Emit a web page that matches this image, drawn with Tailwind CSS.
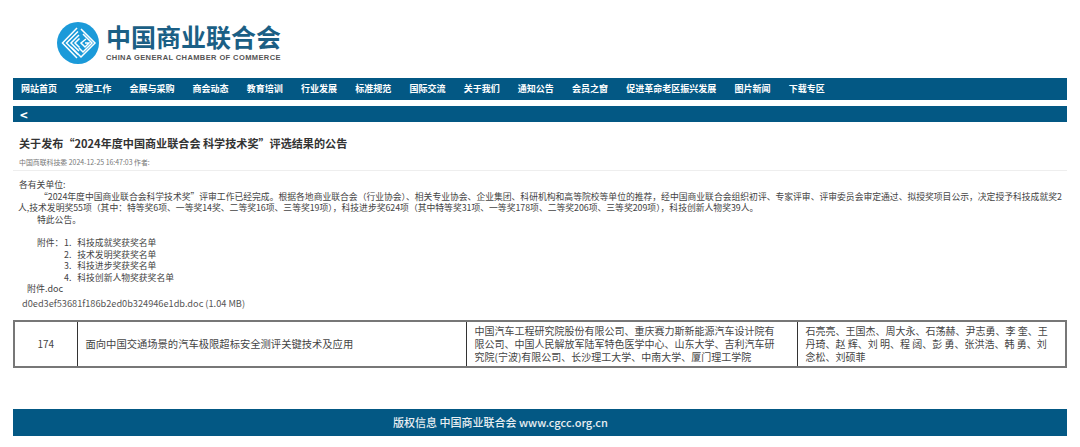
<!DOCTYPE html>
<html lang="zh-CN">
<head>
  <meta charset="UTF-8" />
  <title>关于发布“2024年度中国商业联合会 科学技术奖”评选结果的公告</title>
  <script src="https://cdn.jsdelivr.net/npm/@tailwindcss/browser@4"></script>
</head>
<body class="bg-white h-[447px] overflow-hidden font-['Noto_Sans_CJK_SC','Noto_Sans',sans-serif] text-[#444]">

  <!-- logo -->
  <header class="h-[78px] pl-[57px] pt-[22px] flex items-start gap-[7px]">
    <svg class="w-[42px] h-[42px] shrink-0" viewBox="0 0 42 42">
      <circle cx="21" cy="21" r="21" fill="#1b9ad9" />
      <g fill="none" stroke="#fff" stroke-width="1.5">
        <path d="M20 6 L5.5 21 L20 36" />
        <path d="M21 9.5 L9.5 21 L21 32.5" />
        <path d="M22 13 L14 21 L22 29" />
        <path d="M22.5 16.5 L18 21 L22.5 25.5" />
        <path d="M24 7 L38 21 L24 35 L14 25" />
        <path d="M26 12 L35 21 L26 30 L22 26" />
        <path d="M29 17 L24 21 L28 25 L32 21 L28 21" />
      </g>
    </svg>
    <div class="w-[176px]">
      <div class="text-[25px] leading-[28px] font-bold text-[#1b5f85] whitespace-nowrap">中国商业联合会</div>
      <div class="mt-[3px] text-[7.5px] leading-[10px] font-bold text-[#555] font-['Liberation_Sans',sans-serif] tracking-[0.4px] whitespace-nowrap">CHINA GENERAL CHAMBER OF COMMERCE</div>
    </div>
  </header>

  <main class="mx-[13px]">
    <nav class="h-[22px] bg-[#035884] pl-[8px] flex items-center gap-[18.2px] text-white text-[9px] font-bold whitespace-nowrap">
      <a>网站首页</a>
      <a>党建工作</a>
      <a>会展与采购</a>
      <a>商会动态</a>
      <a>教育培训</a>
      <a>行业发展</a>
      <a>标准规范</a>
      <a>国际交流</a>
      <a>关于我们</a>
      <a>通知公告</a>
      <a>会员之窗</a>
      <a>促进革命老区振兴发展</a>
      <a>图片新闻</a>
      <a>下载专区</a>
    </nav>
    <div class="mt-[6px] h-[16px] bg-[#035884] pl-[7px] flex items-center text-white text-[13px] font-bold leading-none">&lt;</div>

    <h1 class="mt-[13px] ml-[6px] text-[11.1px] leading-[16px] font-bold text-[#333] whitespace-nowrap">关于发布“2024年度中国商业联合会 科学技术奖”评选结果的公告</h1>
    <p class="mt-[6px] ml-[6px] text-[6.9px] leading-[10px] text-[#777] whitespace-nowrap">中国商联科技委 2024-12-25 16:47:03 作者:</p>
    <div class="mt-[3px] border-t border-[#eee]"></div>

    <article class="mt-[8px] text-[8.8px] leading-[11.6px] text-[#444] whitespace-nowrap">
      <p class="ml-[6px]">各有关单位:</p>
      <p class="ml-[26px]">“2024年度中国商业联合会科学技术奖”评审工作已经完成。根据各地商业联合会（行业协会）、相关专业协会、企业集团、科研机构和高等院校等单位的推荐，经中国商业联合会组织初评、专家评审、评审委员会审定通过、拟授奖项目公示，决定授予科技成就奖2</p>
      <p class="ml-[5px]">人,技术发明奖55项（其中：特等奖6项、一等奖14奖、二等奖16项、三等奖19项），科技进步奖624项（其中特等奖31项、一等奖178项、二等奖206项、三等奖209项），科技创新人物奖39人。</p>
      <p class="ml-[24px]">特此公告。</p>
      <div class="mt-[11.6px] ml-[24px] flex">
        <span class="w-[27px]">附件：</span>
        <ol>
          <li>1.&nbsp;&nbsp;&nbsp;科技成就奖获奖名单</li>
          <li>2.&nbsp;&nbsp;&nbsp;技术发明奖获奖名单</li>
          <li>3.&nbsp;&nbsp;&nbsp;科技进步奖获奖名单</li>
          <li>4.&nbsp;&nbsp;&nbsp;科技创新人物奖获奖名单</li>
        </ol>
      </div>
      <p class="ml-[14px] text-[9px]">附件.doc</p>
      <p class="mt-[3px] ml-[9px] text-[9.2px] text-[#555]">d0ed3ef53681f186b2ed0b324946e1db.doc (1.04 MB)</p>
    </article>

    <table class="mt-[10px] w-full table-fixed border-collapse border-2 border-[#777] text-[10px] leading-[13.3px] text-[#444]">
      <tbody>
        <tr class="h-[46px]">
          <td class="w-[63px] border-r border-[#333] text-center">174</td>
          <td class="w-[389px] border-r border-[#333] px-[8px] text-[10.3px]">面向中国交通场景的汽车极限超标安全测评关键技术及应用</td>
          <td class="w-[331px] border-r border-[#333] pl-[8px] pr-[13px]">中国汽车工程研究院股份有限公司、重庆赛力斯新能源汽车设计院有限公司、中国人民解放军陆军特色医学中心、山东大学、吉利汽车研究院(宁波)有限公司、长沙理工大学、中南大学、厦门理工学院</td>
          <td class="pl-[8px] pr-[10px]">石亮亮、王国杰、周大永、石荡赫、尹志勇、李 奎、王丹琦、赵 辉、刘 明、程 阔、彭 勇、张洪浩、韩 勇、刘念松、刘硕菲</td>
        </tr>
      </tbody>
    </table>
  </main>

  <footer class="mt-[41px] mx-[13px] h-[27px] bg-[#035884] pl-[380px] flex items-center text-[11px] font-medium text-[#e8eef2] whitespace-nowrap">版权信息 中国商业联合会 www.cgcc.org.cn</footer>
</body>
</html>
